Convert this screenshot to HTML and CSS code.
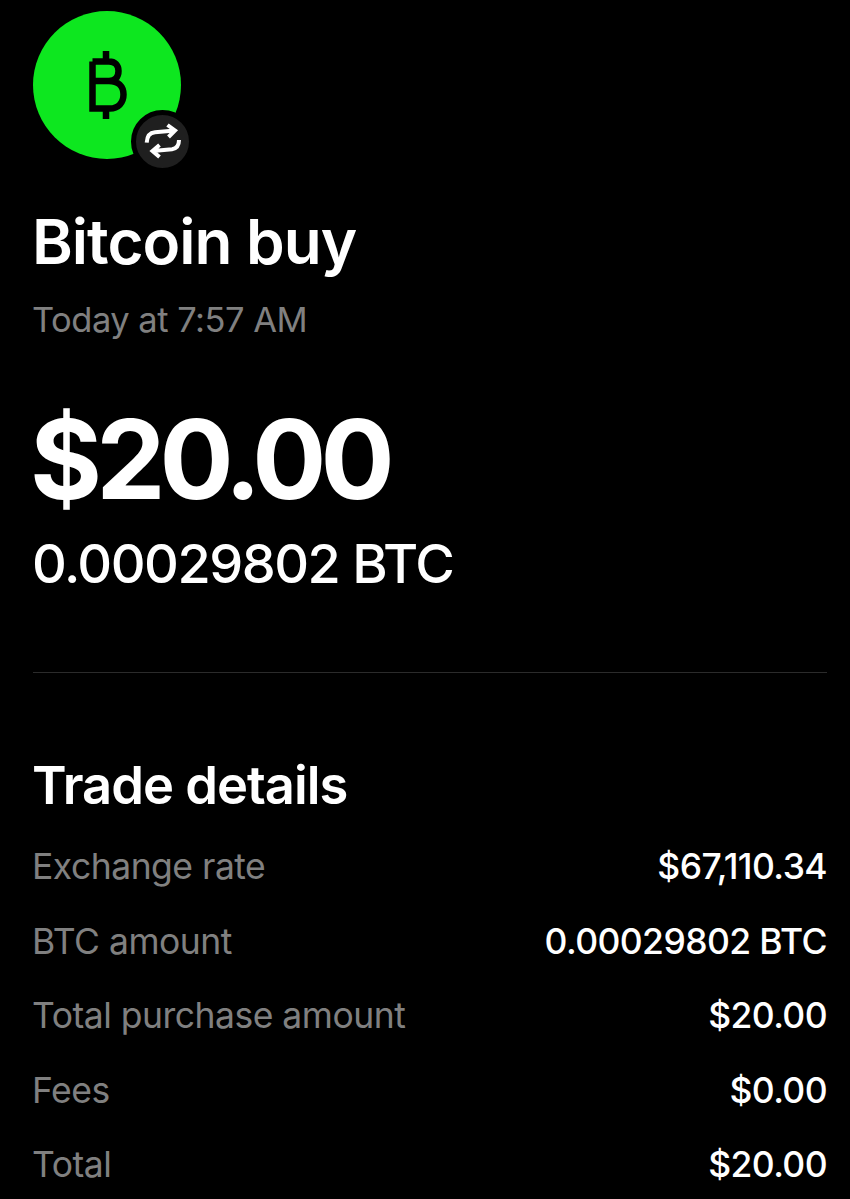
FILE: index.html
```html
<!DOCTYPE html>
<html lang="en">
<head>
  <meta charset="UTF-8" />
  <title>Bitcoin buy</title>
  <link rel="stylesheet" href="styles.css">
</head>
<body>
  <div class="avatar">
    <div class="coin">
      <svg class="coin-mark" width="46" height="74" viewBox="0 0 46 74" fill="none" stroke="#000" stroke-width="6.500">
        <path d="M7.500 13.500H24C30 13.500 33.500 17 33.500 23C33.500 29 30 33 24 33H7.500M24 33C33 33 38.500 38 38.500 46.500C38.500 55 33 60.500 25 60.500H7.500V13.500M21 3V13.500M21 60.500V71"/>
      </svg>
    </div>
    <div class="badge">
      <svg width="38" height="38" viewBox="-1 -1 38 38" fill="none" stroke="#fff" stroke-width="4">
        <path d="M2.700 19.700C3 13 6 9.700 11 9.300L31 7.500M23.500 2L31 7.500L24.500 14"/>
        <path d="M35 17C35 22 33 25.500 28 26.200L9 28M15.500 22L8.500 28L15.500 34"/>
      </svg>
    </div>
  </div>

  <h1>Bitcoin buy</h1>
  <p class="when">Today at 7:57 AM</p>

  <div class="amount">$20.00</div>
  <div class="btc">0.00029802 BTC</div>

  <hr class="rule">

  <h2>Trade details</h2>
  <div class="details">
    <div class="row"><span>Exchange rate</span><b>$67,110.34</b></div>
    <div class="row"><span>BTC amount</span><b>0.00029802 BTC</b></div>
    <div class="row"><span>Total purchase amount</span><b>$20.00</b></div>
    <div class="row"><span>Fees</span><b>$0.00</b></div>
    <div class="row"><span>Total</span><b>$20.00</b></div>
  </div>
</body>
</html>
```

FILE: styles.css
```css
html, body {
  margin: 0;
  padding: 0;
  background-color: #000;
  color: #fff;
  font-family: 'Inter', 'Liberation Sans', sans-serif;
  overflow: hidden;
}

body {
  height: 1199px;
  padding: 11px 23px 0 33px;
  box-sizing: border-box;
}

.avatar {
  position: relative;
  width: 148px;
  height: 148px;
}

.coin {
  width: 148px;
  height: 148px;
  border-radius: 50%;
  background: #0de71f;
  display: flex;
  align-items: center;
  justify-content: center;
}

.coin-mark {
  margin-left: 2px;
}

.badge {
  position: absolute;
  right: -12.500px;
  bottom: -13.500px;
  width: 63px;
  height: 63px;
  box-sizing: border-box;
  border: 5px solid #000;
  border-radius: 50%;
  background: #1f1f1f;
  display: flex;
  align-items: center;
  justify-content: center;
}

h1 {
  font-size: 62px;
  font-weight: 600;
  line-height: 70px;
  letter-spacing: -1px;
  margin: 48px 0 0 -1px;
}

.when {
  font-size: 34.500px;
  line-height: 42px;
  color: #808080;
  margin: 22px 0 0 -1px;
  letter-spacing: -0.5px;
}

.amount {
  font-size: 110px;
  font-weight: 700;
  line-height: 110px;
  letter-spacing: -5.900px;
  margin: 63px 0 0 -3px;
}

.btc {
  font-size: 54px;
  font-weight: 500;
  line-height: 58px;
  letter-spacing: -1.500px;
  margin: 21px 0 0 -1px;
}

.rule {
  border: 0;
  height: 1px;
  background: #2b2b2b;
  margin: 79px 0 0;
}

h2 {
  font-size: 52.500px;
  font-weight: 600;
  line-height: 56px;
  letter-spacing: -1px;
  margin: 84px 0 0 -1px;
}

.details {
  margin-top: 17px;
}

.row {
  display: flex;
  justify-content: space-between;
  align-items: center;
  font-size: 35.500px;
  line-height: 42px;
  height: 74.500px;
  letter-spacing: -0.5px;
}

.row span {
  color: #808080;
  margin-left: -1px;
}

.row b {
  font-weight: 500;
  letter-spacing: -0.6px;
}
```
